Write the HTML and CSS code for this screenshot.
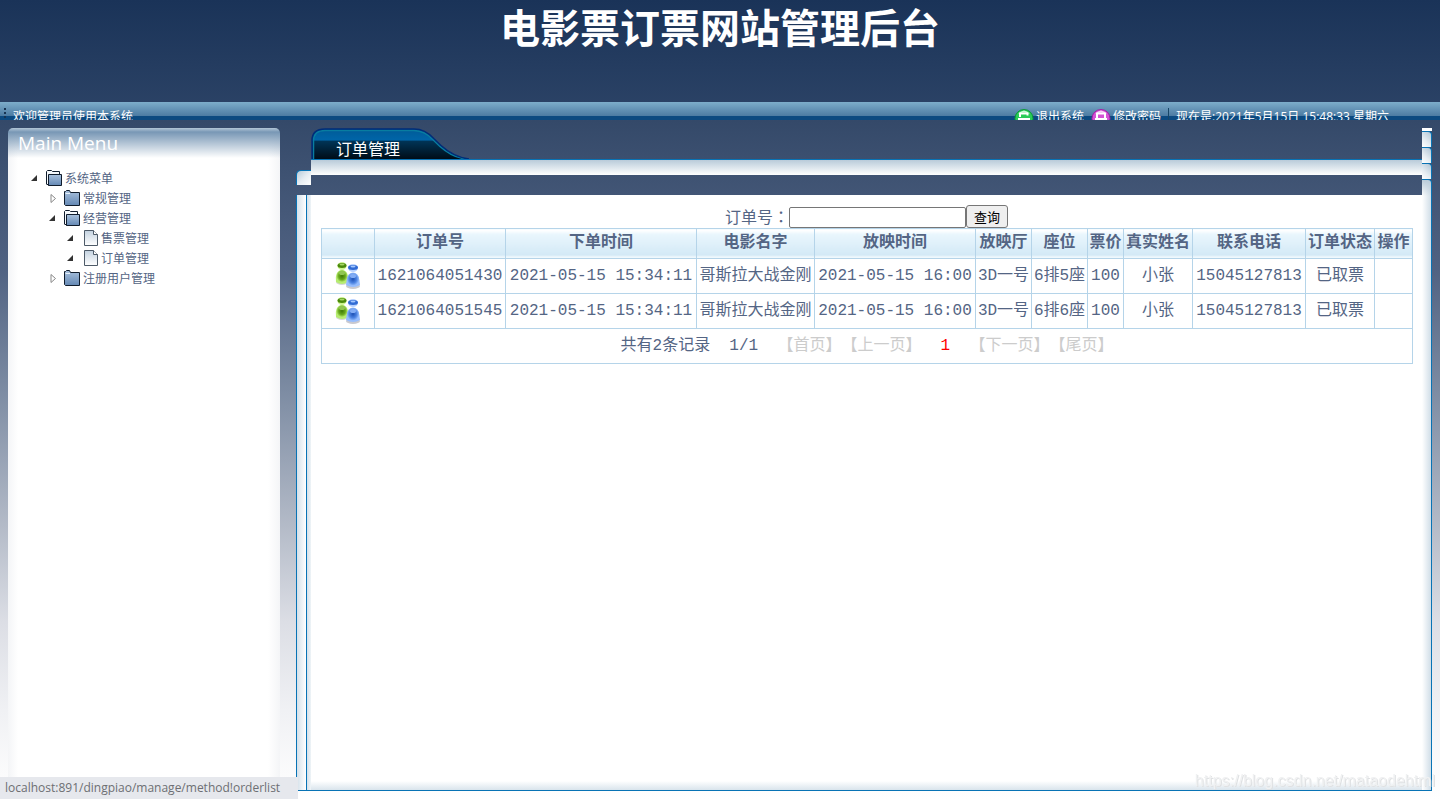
FILE: index.html
```html
<!DOCTYPE html>
<html lang="zh-CN">
<head>
<meta charset="utf-8">
<title>电影票订票网站管理后台</title>
<link rel="stylesheet" href="styles.css">
</head>
<body>
<svg class="defs" aria-hidden="true">
  <defs>
    <linearGradient id="folder-fill" x1="0" y1="0" x2="0" y2="1"><stop offset="0" stop-color="#a9c1dd"/><stop offset="1" stop-color="#6488b4"/></linearGradient>
    <linearGradient id="doc-fill" x1="0" y1="0" x2="0" y2="1"><stop offset="0" stop-color="#c3d2e0"/><stop offset="1" stop-color="#ffffff"/></linearGradient>
    <linearGradient id="tab-upper" x1="0" y1="0" x2="0" y2="1"><stop offset="0" stop-color="#005a96"/><stop offset="1" stop-color="#0066aa"/></linearGradient>
    <linearGradient id="tab-lower" x1="0" y1="0" x2="0" y2="1"><stop offset="0" stop-color="#003558"/><stop offset="1" stop-color="#000d18"/></linearGradient>
    <radialGradient id="green-body" cx=".5" cy=".5" r=".55"><stop offset="0" stop-color="#3f7a06"/><stop offset=".55" stop-color="#67a81c"/><stop offset="1" stop-color="#c2f47c"/></radialGradient>
    <radialGradient id="blue-body" cx=".5" cy=".5" r=".55"><stop offset="0" stop-color="#1c50b4"/><stop offset=".55" stop-color="#4c83e2"/><stop offset="1" stop-color="#a4c8ff"/></radialGradient>
    <clipPath id="tab-shape"><path d="M1 32V13Q1 1 14 1H103Q114 1 123 11L130 18Q143 30 158 32Z"/></clipPath>
    <symbol id="folder" viewBox="0 0 16 16"><path d="M.5 14.5V1.5H1.5L2.5.5H5.500L6.500 2.500H15.500V15.500H1.500Z" fill="url(#folder-fill)" stroke="#101c2c"/><path d="M1.500 3.500H6" stroke="#e9f2fb"/></symbol>
    <symbol id="folder-open" viewBox="0 0 16 16"><path d="M.5 14.500V1.500L1.500.500H5.500L6.500 1.500H13.500V4" fill="#f5f8fb" stroke="#101c2c"/><path d="M2.500 15.500V4.500H15.500V15.500Z" fill="url(#folder-fill)" stroke="#101c2c"/><path d="M.5 13.500L2.500 15.500" stroke="#101c2c"/></symbol>
    <symbol id="doc" viewBox="0 0 16 16"><path d="M2.500.500H11.500L15.500 4.500V15.500H2.500Z" fill="url(#doc-fill)" stroke="#4d5a68"/><path d="M11.500.500V4.500H15.500" fill="#fff" stroke="#4d5a68"/></symbol>
    <symbol id="arrow-open" viewBox="0 0 8 10"><path d="M1 8L7 2V8Z" fill="#333"/></symbol>
    <symbol id="arrow-closed" viewBox="0 0 8 10"><path d="M3 1.500L7.500 5.500L3 9.500Z" fill="#fff" stroke="#888"/></symbol>
    <symbol id="users" viewBox="0 0 26 28">
      <ellipse cx="18" cy="24" rx="7" ry="3" fill="#c9c9cf"/><ellipse cx="7" cy="20" rx="6" ry="3" fill="#d5d5d5"/>
      <ellipse cx="7" cy="4" rx="4.500" ry="4" fill="#cdf58f"/><ellipse cx="7" cy="3.500" rx="4.500" ry="2.500" fill="#4b8a0b"/><ellipse cx="7" cy="2.500" rx="2.500" ry="1" fill="#a5d663"/>
      <path d="M2 11Q7 5 12 11Q14 15 13 20Q7 24 1 20Q0 15 2 11Z" fill="#b6ec70"/><ellipse cx="7" cy="14" rx="5.500" ry="6" fill="url(#green-body)"/><ellipse cx="7" cy="11" rx="3" ry="2" fill="#91c653"/>
      <ellipse cx="18" cy="6" rx="5" ry="4" fill="#b8d2ff"/><ellipse cx="18" cy="5.500" rx="5" ry="2.500" fill="#316bd4"/><ellipse cx="18" cy="4.500" rx="2.500" ry="1" fill="#a3c7ff"/>
      <path d="M13 14Q18 8 23 14Q25 18 25 23Q18 27 11 23Q11 18 13 14Z" fill="#94bcff"/><ellipse cx="18" cy="17" rx="6" ry="6.500" fill="url(#blue-body)"/><ellipse cx="18" cy="14" rx="3" ry="2" fill="#83adf5"/>
    </symbol>
  </defs>
</svg>

<header class="top">
  <h1 class="site-title">电影票订票网站管理后台</h1>
  <div class="toolbar">
    <span class="grip"></span>
    <span class="welcome">欢迎管理员使用本系统</span>
    <a class="tool" href="#logout"><svg class="tool-icon" viewBox="0 0 20 20"><circle cx="10" cy="10.500" r="9" fill="#2acb58" stroke="#0b9a37"/><path d="M4 6Q10-1 16 6Q10 3 4 6Z" fill="#c4f8d0"/><path d="M6 9V5.500H13.500V7.500" fill="none" stroke="#fff" stroke-width="2"/><path d="M4 10H16V16H4Z" fill="#fff"/></svg>退出系统</a>
    <a class="tool" href="#password"><svg class="tool-icon" viewBox="0 0 20 20"><circle cx="10" cy="10.500" r="9" fill="#d552d5" stroke="#a51fa5"/><path d="M4 6Q10-1 16 6Q10 3 4 6Z" fill="#f8d0f8"/><path d="M6 10V5.500H14V10" fill="none" stroke="#fff" stroke-width="2"/><path d="M4 10H16V16H4Z" fill="#fff"/></svg>修改密码</a>
    <span class="clock">现在是:2021年5月15日 15:48:33 星期六</span>
  </div>
</header>

<div class="workspace">
  <nav class="sidebar">
    <h2 class="sidebar-title">Main Menu</h2>
    <ul class="tree">
      <li><a class="node" href="#system"><svg class="arrow"><use href="#arrow-open"/></svg><svg class="node-icon"><use href="#folder-open"/></svg>系统菜单</a>
        <ul class="branch">
          <li><a class="node" href="#general"><svg class="arrow"><use href="#arrow-closed"/></svg><svg class="node-icon"><use href="#folder"/></svg>常规管理</a></li>
          <li><a class="node" href="#business"><svg class="arrow"><use href="#arrow-open"/></svg><svg class="node-icon"><use href="#folder-open"/></svg>经营管理</a>
            <ul class="branch">
              <li><a class="node" href="#tickets"><svg class="arrow"><use href="#arrow-open"/></svg><svg class="node-icon"><use href="#doc"/></svg>售票管理</a></li>
              <li><a class="node" href="#orders"><svg class="arrow"><use href="#arrow-open"/></svg><svg class="node-icon"><use href="#doc"/></svg>订单管理</a></li>
            </ul>
          </li>
          <li><a class="node" href="#users-admin"><svg class="arrow"><use href="#arrow-closed"/></svg><svg class="node-icon"><use href="#folder"/></svg>注册用户管理</a></li>
        </ul>
      </li>
    </ul>
  </nav>

  <div class="frame">
    <div class="edge-left"><div class="corner"></div><div class="rail"></div></div>
    <main class="center">
      <div class="tab">
        <svg class="tab-bg" viewBox="0 0 158 32" preserveAspectRatio="none" aria-hidden="true"><g clip-path="url(#tab-shape)"><rect width="158" height="14" fill="url(#tab-upper)"/><rect y="13" width="158" height="19" fill="url(#tab-lower)"/></g><path d="M2.500 32V13Q2.500 2.500 14 2.500H103Q114 3 121 11L129 19Q142 31 156 32" fill="none" stroke="#087da0" stroke-width="1.500"/><path d="M1 32V13Q1 1 14 1H103Q114 1 123 11L130 18Q143 30 158 32" fill="none" stroke="#002d78" stroke-width="1.500"/></svg>
        <span class="tab-label">订单管理</span>
      </div>
      <div class="band"></div>
      <div class="panel">
        <form class="search">
          <label for="order-no">订单号<span class="colon" lang="zh-TW">：</span></label><input class="search-input" id="order-no" type="text"><button class="search-button" type="button">查询</button>
        </form>
        <table class="orders">
          <colgroup><col class="c-icon"><col class="c-order"><col class="c-time"><col class="c-film"><col class="c-show"><col class="c-hall"><col class="c-seat"><col class="c-price"><col class="c-name"><col class="c-phone"><col class="c-status"><col class="c-action"></colgroup>
          <thead><tr><th></th><th>订单号</th><th>下单时间</th><th>电影名字</th><th>放映时间</th><th>放映厅</th><th>座位</th><th>票价</th><th>真实姓名</th><th>联系电话</th><th>订单状态</th><th>操作</th></tr></thead>
          <tbody>
            <tr><td><svg class="users"><use href="#users"/></svg></td><td>1621064051430</td><td>2021-05-15 15:34:11</td><td>哥斯拉大战金刚</td><td>2021-05-15 16:00</td><td>3D一号</td><td>6排5座</td><td>100</td><td>小张</td><td>15045127813</td><td>已取票</td><td></td></tr>
            <tr><td><svg class="users"><use href="#users"/></svg></td><td>1621064051545</td><td>2021-05-15 15:34:11</td><td>哥斯拉大战金刚</td><td>2021-05-15 16:00</td><td>3D一号</td><td>6排6座</td><td>100</td><td>小张</td><td>15045127813</td><td>已取票</td><td></td></tr>
            <tr><td colspan="12">共有2条记录&nbsp; 1/1&nbsp; <span class="off">【首页】【上一页】</span>&nbsp; <span class="current">1</span>&nbsp; <span class="off">【下一页】【尾页】</span></td></tr>
          </tbody>
        </table>
      </div>
    </main>
    <div class="edge-right"><div class="stub"></div><div class="cap"></div><div class="cap"></div><div class="cap"></div><div class="cap cap-long"></div></div>
  </div>
</div>
<div class="status">localhost:891/dingpiao/manage/method!orderlist</div>
<div class="watermark">https://blog.csdn.net/mataodehtml</div>
</body>
</html>
```
FILE: styles.css
```css
* { box-sizing: border-box; }
body {
  margin: 0;
  min-height: 100vh;
  display: flex;
  flex-direction: column;
  font-family: "Noto Sans CJK SC", sans-serif;
  color: #546584;
}
a { color: inherit; text-decoration: none; }
ul { margin: 0; padding: 0; list-style: none; }
.defs { position: absolute; width: 0; height: 0; }

.top {
  flex: none;
  display: flex;
  flex-direction: column;
  background: linear-gradient(#1a3358, #2d4467);
}
.site-title {
  height: 102px;
  margin: 0;
  font-size: 40px;
  line-height: 52px;
  text-align: center;
  color: #fff;
}
.toolbar {
  display: flex;
  align-items: flex-start;
  height: 18px;
  padding: 6px 51px 0 4px;
  overflow: hidden;
  font: 12px/18px "Open Sans", "Noto Sans CJK SC", sans-serif;
  color: #fff;
  background: linear-gradient(#7dadca, #4c7ba2 14px, #0c4a80 14px);
}
.grip { width: 2px; height: 14px; margin-right: 7px; border-left: 2px dotted #173452; }
.welcome { flex: 1; }
.tool { display: flex; gap: 2px; margin-right: 7px; }
.tool-icon { width: 20px; height: 20px; }
.clock { padding-left: 7px; border-left: 1px solid #174667; }

.workspace {
  flex: 1;
  display: flex;
  gap: 16px;
  padding: 8px 8px 0;
  background: linear-gradient(#344969, #506282 22%, #7d8ca3 40%, #b4bbc8 60%, #dcdee5 74%, #f0f1f4 87%, #fff);
}
.sidebar {
  flex: none;
  width: 272px;
  border-radius: 5px 5px 0 0;
  background:
    linear-gradient(#b3c6d6, #7897b5 4px, #fff0 30px) no-repeat,
    linear-gradient(90deg, #f4f5f7, #fff 10px, #fff 260px, #f4f5f7);
}
.sidebar-title {
  margin: 0 0 9px;
  padding-left: 10px;
  font: 19px/31px "Open Sans", sans-serif;
  color: #fff;
}
.tree { padding-left: 20px; font-size: 12px; }
.branch { padding-left: 18px; }
.node { display: flex; align-items: center; height: 20px; line-height: 18px; }
.arrow { width: 8px; height: 10px; margin: 0 8px 0 2px; }
.node-icon { width: 16px; height: 16px; margin-right: 3px; }

.frame { flex: 1; display: flex; margin-bottom: 8px; min-width: 0; }
.edge-left { flex: none; display: flex; flex-direction: column; gap: 10px; width: 15px; padding-top: 42px; }
.corner {
  height: 15px;
  border: solid #0873b5;
  border-width: 1px 0 0 1px;
  border-radius: 5px 0 0 0;
  background: linear-gradient(135deg, #b9cbd9, #e6edf2 50%, #fff);
}
.rail {
  flex: 1;
  border: solid #0873b5;
  border-width: 0 0 1px 1px;
  background: linear-gradient(90deg, #d5e1ea, #fff 9px, #0873b5 9px, #0873b5 10px, #d5e1ea 10px, #eff4f7);
}
.center { flex: 1; display: flex; flex-direction: column; min-width: 0; }
.tab { display: grid; width: 158px; height: 31px; }
.tab-bg { grid-area: 1 / 1; width: 158px; height: 31px; }
.tab-label { grid-area: 1 / 1; padding: 8px 0 0 25px; line-height: 24px; color: #fff; }
.band { height: 16px; margin-bottom: 20px; border-top: 1px solid #0873b5; background: linear-gradient(#b9cbd9, #fff); }
.panel {
  flex: 1;
  padding: 10px;
  border-bottom: 1px solid #0873b5;
  background: linear-gradient(#fff0 calc(100% - 9px), #d9e4ec), #fff;
  text-align: center;
}
.search { display: flex; justify-content: center; align-items: flex-end; height: 23px; line-height: 24px; }
.colon { font-family: "Noto Sans CJK TC", sans-serif; }
.search-input { width: 177px; height: 21px; border: 1px solid #767676; border-radius: 2px; background: #fff; }
.search-button {
  width: 42px;
  height: 23px;
  padding: 0;
  border: 1px solid #767676;
  border-radius: 3px;
  background: #efefef;
  font: 13px/20px "Noto Sans CJK SC", sans-serif;
  color: #000;
}
.orders {
  width: 100%;
  table-layout: fixed;
  border-collapse: collapse;
  font: 16px/24px "Liberation Mono", "Noto Sans CJK SC", monospace;
  text-spacing-trim: space-all;
}
.orders th, .orders td { padding: 0; border: 1px solid #b5d4e9; white-space: nowrap; text-align: center; }
.orders th { height: 30px; padding-bottom: 2px; background: linear-gradient(#fff 1px, #e9f6fd 5px, #d3e9f6 26px, #eff8fd 27px); }
.orders td { height: 35px; }
.c-icon { width: 53px; }
.c-order { width: 131px; }
.c-time { width: 191px; }
.c-film { width: 118px; }
.c-show { width: 161px; }
.c-hall, .c-seat { width: 56px; }
.c-price { width: 36px; }
.c-name, .c-status { width: 69px; }
.c-phone { width: 113px; }
.c-action { width: 38px; }
.users { display: block; width: 26px; height: 28px; margin: 0 auto; }
.off { color: #ccc; }
.current { color: #f00; }

.edge-right { flex: none; display: flex; flex-direction: column; width: 10px; }
.stub { height: 3px; background: #fff; }
.cap {
  height: 16px;
  border: solid #0873b5;
  border-width: 1px 1px 0 0;
  border-radius: 0 4px 0 0;
  background: linear-gradient(225deg, #b0c4d4, #e6edf2 60%, #fff);
}
.cap-long {
  flex: 1;
  border-bottom-width: 1px;
  background: linear-gradient(#b9cbd9, #fff0 16px), linear-gradient(90deg, #fff, #d0dde7);
}

.status {
  position: fixed;
  left: 0;
  bottom: 0;
  height: 22px;
  padding: 0 18px 0 5px;
  font: 12px/22px "Open Sans", sans-serif;
  color: #6d6f73;
  background: #e6e8ed;
}
.watermark {
  position: fixed;
  right: 5px;
  bottom: 8px;
  font: 16px/20px "Liberation Sans", sans-serif;
  color: #f0f1f2;
  text-shadow: 1px 1px 0 #dfe1e3;
}
```
